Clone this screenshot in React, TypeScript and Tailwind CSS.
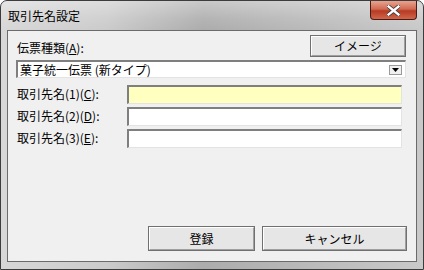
import React from "react";

const font = { fontFamily: '"MS UI Gothic","Noto Sans CJK JP","Noto Sans",sans-serif' };

function Btn({ w, children }: { w: string; children: React.ReactNode }) {
  return (
    <div className={`${w} h-full border border-[#707070] bg-[#e6e6e6] flex`}>
      <div className="flex-1 border-t border-l border-t-white border-l-white border-r border-b border-r-[#a0a0a0] border-b-[#a0a0a0] flex items-center justify-center text-[12px] text-black">
        {children}
      </div>
    </div>
  );
}

function Field({ label, yellow }: { label: React.ReactNode; yellow?: boolean }) {
  return (
    <div className="flex items-center h-[20px]">
      <div className="w-[111px] pl-[1px] text-[12px] text-black leading-none">{label}</div>
      <div
        className={`w-[275px] h-[19px] border-t-2 border-l-2 border-t-[#7f7f7f] border-l-[#7f7f7f] border-r border-b border-r-[#e3e3e3] border-b-[#e3e3e3] ${
          yellow ? "bg-[#ffffc0]" : "bg-white"
        }`}
      />
    </div>
  );
}

export default function App() {
  return (
    <div className="w-[424px] h-[270px] bg-white" style={font}>
      <div className="w-[424px] h-[270px] rounded-t-[7px] border border-[#3c3c3c] flex flex-col overflow-hidden bg-[linear-gradient(90deg,#d7d7d7_0%,#cbcbcb_25%,#acacac_48%,#b8b8b8_70%,#c9c9c9_100%)]">
        <div className="h-[29px] flex items-start relative bg-[linear-gradient(180deg,rgba(255,255,255,0.35)_0%,rgba(255,255,255,0.1)_60%,rgba(255,255,255,0)_100%)]">
          <span className="ml-[7px] mt-[9px] text-[12px] leading-none text-black">取引先名設定</span>
          <div className="ml-auto mr-[6px] w-[47px] h-[19px] rounded-b-[4px] border border-[#4a1a14] border-t-0 bg-[linear-gradient(180deg,#e8a38f_0%,#d26a52_45%,#b83a22_55%,#d0664c_100%)] flex items-center justify-center">
            <svg width="13" height="11" viewBox="0 0 13 11">
              <path d="M1.5 1.5 L11.5 9.5 M11.5 1.5 L1.5 9.5" stroke="#3a3a3a" strokeWidth="4" strokeLinecap="square" />
              <path d="M1.5 1.5 L11.5 9.5 M11.5 1.5 L1.5 9.5" stroke="#ffffff" strokeWidth="2.4" strokeLinecap="square" />
            </svg>
          </div>
        </div>
        <div className="flex-1 mx-[6px] mb-[7px] border border-[#6b6b6b] bg-[#f0f0f0] flex flex-col pl-[8px] pt-[3px]">
          <div className="flex items-end h-[23px]">
            <span className="ml-[1px] text-[12px] leading-none mb-[3px] text-black">
              伝票種類(<u>A</u>):
            </span>
            <div className="ml-auto mr-[10px] h-[22px]">
              <Btn w="w-[96px]">イメージ</Btn>
            </div>
          </div>
          <div className="mt-[3px] w-[390px] h-[18px] border-t-2 border-l-2 border-t-[#7f7f7f] border-l-[#7f7f7f] border-r border-b border-r-[#e3e3e3] border-b-[#e3e3e3] bg-white flex items-center">
            <span className="ml-[2px] text-[12px] leading-none text-black">菓子統一伝票 (新タイプ)</span>
            <div className="ml-auto mr-[3px] w-[13px] h-[10px] border border-[#9a9a9a] bg-[#f0f0f0] flex items-center justify-center">
              <svg width="7" height="4" viewBox="0 0 7 4">
                <path d="M0 0 H7 L3.5 4 Z" fill="#000" />
              </svg>
            </div>
          </div>
          <div className="mt-[6px] flex flex-col gap-[2px]">
            <Field yellow label={<>取引先名(1)(<u>C</u>):</>} />
            <Field label={<>取引先名(2)(<u>D</u>):</>} />
            <Field label={<>取引先名(3)(<u>E</u>):</>} />
          </div>
          <div className="mt-auto mb-[10px] h-[25px] flex pl-[132px] gap-[7px]">
            <Btn w="w-[107px]">登録</Btn>
            <Btn w="w-[145px]">キャンセル</Btn>
          </div>
        </div>
      </div>
    </div>
  );
}
